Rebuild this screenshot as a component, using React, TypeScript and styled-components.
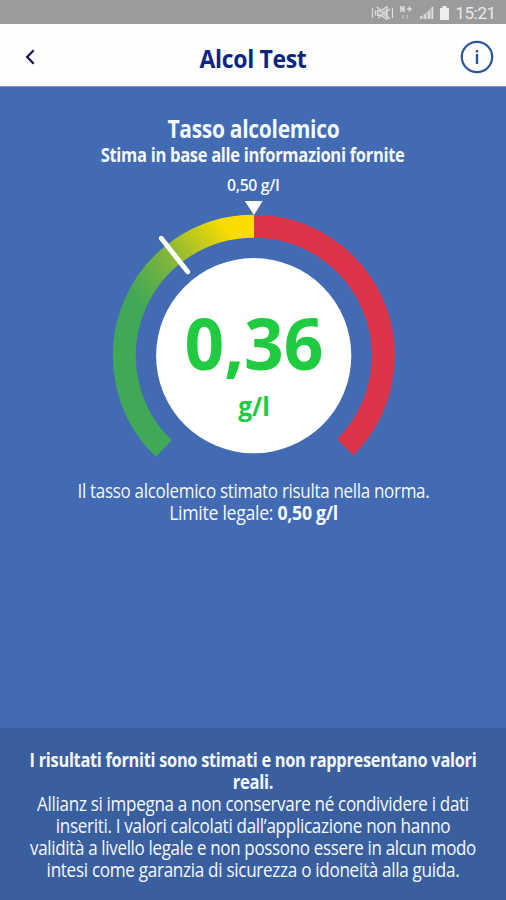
import React from 'react';
import styled, { createGlobalStyle } from 'styled-components';

const GlobalStyle = createGlobalStyle`
  * { box-sizing: border-box; }
  body { margin: 0; background: #426bb3; }
`;

const Screen = styled.main`
  width: 506px;
  height: 900px;
  display: flex;
  flex-direction: column;
  overflow: hidden;
  background: #426bb3;
  color: #f4f8ff;
  font-family: 'Open Sans', 'Noto Sans', sans-serif;
`;

const StatusBar = styled.div`
  height: 24px;
  flex: none;
  display: flex;
  align-items: center;
  justify-content: flex-end;
  padding: 2px 11px 0 0;
  background: #9b9b9b;
  color: #e9e9e9;
  font: 400 17px/22px Roboto, sans-serif;
`;

const StatusIcons = styled.svg`
  width: 84px;
  height: 20px;
  margin-right: 1px;
`;

const Clock = styled.span`
  width: 39px;
  display: flex;
  justify-content: center;
  letter-spacing: -0.35px;
`;

const Header = styled.header`
  height: 63px;
  flex: none;
  display: grid;
  grid-template-columns: 60px 1fr 60px;
  align-items: center;
  background: #fefefe;
  color: #0a2682;
  border-bottom: 1px solid #7f95bd;
`;

const IconButton = styled.button<{ $end?: boolean }>`
  height: 62px;
  padding: ${(p) => (p.$end ? '4px 12px 0 0' : '4px 0 0 24px')};
  display: flex;
  align-items: center;
  justify-content: ${(p) => (p.$end ? 'flex-end' : 'flex-start')};
  border: 0;
  background: none;
`;

const Line = styled.span<{ $size: number; $height: number; $stretch: number; $weight?: number; $tight?: boolean }>`
  display: flex;
  justify-content: center;
  white-space: pre;
  font-size: ${(p) => p.$size}px;
  line-height: ${(p) => p.$height}px;
  font-weight: ${(p) => p.$weight ?? 400};
  letter-spacing: ${(p) => (p.$tight ? '-0.35px' : 'normal')};
  transform: scaleX(${(p) => p.$stretch});
`;

const Title = styled.h1`
  margin: 6px 0 0;
`;

const Result = styled.section`
  flex: 1;
  display: flex;
  flex-direction: column;
  align-items: center;
  padding-top: 27px;
`;

const Limit = styled.div`
  height: 32px;
  padding-top: 2px;
`;

const Gauge = styled.div`
  display: grid;
  width: 300px;
  height: 270px;
  margin-left: 1px;
  > * { grid-area: 1 / 1; }
`;

const Dial = styled.svg`
  width: 300px;
  height: 270px;
`;

const Reading = styled.div`
  z-index: 1;
  padding-top: 96px;
  color: #20cb42;
`;

const Message = styled.div`
  margin-top: 12px;
`;

const Disclaimer = styled.footer`
  height: 172px;
  flex: none;
  padding-top: 21px;
  background: #3a5f9f;
`;

const DISCLAIMER = [
  { text: 'I risultati forniti sono stimati e non rappresentano valori', stretch: 0.85, weight: 700 },
  { text: 'reali.', stretch: 0.86, weight: 700 },
  { text: 'Allianz si impegna a non conservare né condividere i dati', stretch: 0.884 },
  { text: 'inseriti. I valori calcolati dall’applicazione non hanno', stretch: 0.886 },
  { text: 'validità a livello legale e non possono essere in alcun modo', stretch: 0.878 },
  { text: 'intesi come garanzia di sicurezza o idoneità alla guida.', stretch: 0.888 },
];

function DeviceStatus() {
  return (
    <StatusIcons viewBox="0 0 84 20" fill="none" stroke="#dedede" strokeWidth="1.2">
      <path d="M1.500 5v10M4.500 7.500v5M21.500 5v10M6 4l13 12M19 6l-12 9" />
      <path d="M6.500 7.500h3.500l6-4v13l-6-4H6.500z" fill="#d4d4d4" fillOpacity=".45" />
      <path d="M30 9V3l3 6V3M36 6h5M38.500 3.500v5" strokeWidth="1.500" />
      <path d="M32 12v4M36 12v4" strokeWidth="1.500" opacity=".5" />
      <path d="M48 16L62 3v13z" fill="#b7b7b7" stroke="none" />
      <path d="M50 16v-3M54 16V11M58 16V8M61.500 16V4" stroke="#dedede" strokeWidth="1.600" />
      <path d="M69 5h2.500V3h4v2H78v12h-9z" fill="#ededed" stroke="none" />
    </StatusIcons>
  );
}

function AlcoholGauge() {
  return (
    <Gauge>
      <Dial viewBox="104 198 300 270">
        <defs>
          <linearGradient id="safe" gradientUnits="userSpaceOnUse" x1="133" y1="296" x2="226" y2="226">
            <stop offset="0" stopColor="#40a856" />
            <stop offset=".42" stopColor="#7db53c" />
            <stop offset="1" stopColor="#fbdc00" />
          </linearGradient>
        </defs>
        <path d="M163.800 448.600A129.300 129.300 0 0 1 254 226.300" fill="none" stroke="url(#safe)" strokeWidth="23" />
        <path d="M254 226.300A129.300 129.300 0 0 1 345.200 447.200" fill="none" stroke="#dd344a" strokeWidth="23" />
        <path d="M244.700 201h18L254 215z" fill="#fff" />
        <circle cx="253.700" cy="355.700" r="97.600" fill="#fff" />
        <path d="M161.300 238.200L187.700 271.800" stroke="#fff" strokeWidth="4.800" strokeLinecap="round" />
      </Dial>
      <Reading>
        <Line $size={72} $height={97} $stretch={0.965} $weight={700}>0,36</Line>
        <Line $size={27} $height={30} $stretch={0.91} $weight={700}>g/l</Line>
      </Reading>
    </Gauge>
  );
}

export default function App() {
  return (
    <>
      <GlobalStyle />
      <Screen>
        <StatusBar>
          <DeviceStatus />
          <Clock>15:21</Clock>
        </StatusBar>
        <Header>
          <IconButton aria-label="Indietro">
            <svg width="14" height="18" viewBox="0 0 14 18" fill="none" stroke="#171758" strokeWidth="2.300">
              <path d="M9.700 2.200L3.200 9l6.500 6.800" />
            </svg>
          </IconButton>
          <Title>
            <Line $size={25.5} $height={30} $stretch={0.9} $weight={700} $tight>Alcol Test</Line>
          </Title>
          <IconButton $end aria-label="Informazioni">
            <svg width="34" height="34" viewBox="0 0 34 34" fill="none" stroke="#2a5596">
              <circle cx="17" cy="17" r="15.200" strokeWidth="2.200" />
              <path d="M17 14v10M17 10v2.500" strokeWidth="2.400" />
            </svg>
          </IconButton>
        </Header>
        <Result>
          <Line $size={24.3} $height={30} $stretch={0.865} $weight={700} $tight>Tasso alcolemico</Line>
          <Line $size={19} $height={22} $stretch={0.87} $weight={700} $tight>Stima in base alle informazioni fornite</Line>
          <Limit>
            <Line $size={17} $height={33} $stretch={0.93} $weight={600} $tight>0,50 g/l</Line>
          </Limit>
          <AlcoholGauge />
          <Message>
            <Line $size={19.3} $height={22} $stretch={0.882} $tight>Il tasso alcolemico stimato risulta nella norma.</Line>
            <Line $size={19.3} $height={22} $stretch={0.92} $tight>
              Limite legale: <b>0,50 g/l</b>
            </Line>
          </Message>
        </Result>
        <Disclaimer>
          {DISCLAIMER.map((line) => (
            <Line key={line.text} $size={19.3} $height={22.1} $stretch={line.stretch} $weight={line.weight} $tight>
              {line.text}
            </Line>
          ))}
        </Disclaimer>
      </Screen>
    </>
  );
}
